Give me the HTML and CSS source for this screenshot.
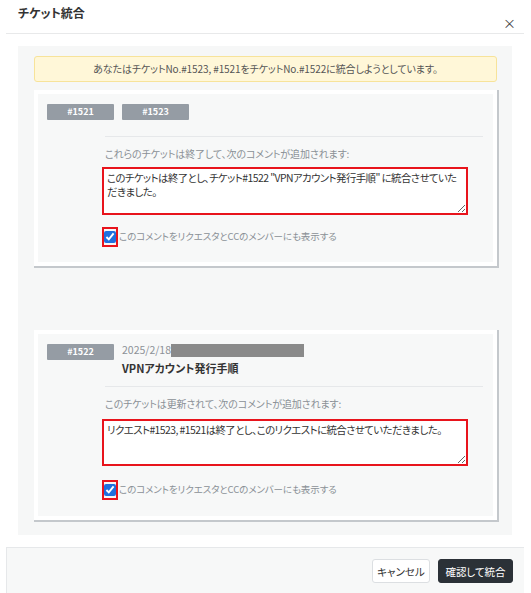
FILE: index.html
```html
<!DOCTYPE html>
<html lang="ja">
<head>
    <meta charset="UTF-8">
    <meta name="viewport" content="width=device-width, initial-scale=1.0">
    <title>チケット統合</title>
    <link rel="stylesheet" href="styles.css">
</head>
<body>
    <div class="modal">
        <div class="modal-header">
            <h1 class="modal-title">チケット統合</h1>
            <span class="close">×</span>
        </div>

        <div class="modal-body">
            <div class="merge-panel">
                <div class="alert">あなたはチケットNo.#1523, #1521をチケットNo.#1522に統合しようとしています。</div>

                <div class="ticket-card">
                    <div class="ticket-head">
                        <span class="badge">#1521</span>
                        <span class="badge">#1523</span>
                    </div>
                    <div class="ticket-body">
                        <p class="field-label">これらのチケットは終了して、次のコメントが追加されます:</p>
                        <textarea class="comment" rows="2">このチケットは終了とし、チケット#1522 "VPNアカウント発行手順" に統合させていただきました。</textarea>
                        <label class="check-row">
                            <span class="check-mark"><input type="checkbox" checked></span>
                            このコメントをリクエスタとCCのメンバーにも表示する
                        </label>
                    </div>
                </div>

                <div class="ticket-card target">
                    <div class="ticket-head">
                        <span class="badge">#1522</span>
                        <div class="ticket-info">
                            <div class="ticket-date">2025/2/18<span class="redacted"></span></div>
                            <div class="ticket-subject">VPNアカウント発行手順</div>
                        </div>
                    </div>
                    <div class="ticket-body">
                        <p class="field-label">このチケットは更新されて、次のコメントが追加されます:</p>
                        <textarea class="comment" rows="2">リクエスト#1523, #1521は終了とし、このリクエストに統合させていただきました。</textarea>
                        <label class="check-row">
                            <span class="check-mark"><input type="checkbox" checked></span>
                            このコメントをリクエスタとCCのメンバーにも表示する
                        </label>
                    </div>
                </div>
            </div>
        </div>

        <div class="modal-footer">
            <button class="btn btn-light">キャンセル</button>
            <button class="btn btn-dark">確認して統合</button>
        </div>
    </div>
</body>
</html>
```

FILE: styles.css
```css
* {
    margin: 0;
    padding: 0;
    box-sizing: border-box;
}

body {
    background: #fff;
    color: #333;
    font-family: "Noto Sans CJK JP", "Noto Sans", sans-serif;
    font-feature-settings: "palt";
    font-size: 10px;
    line-height: 1.4;
}

.modal {
    margin-left: 6px;
    width: 518px;
}

.modal-header {
    height: 34px;
    display: flex;
    align-items: center;
    justify-content: space-between;
    padding: 0 8px 0 12px;
    border-bottom: 1px solid #e8e9ea;
}

.modal-title {
    font-size: 12px;
    font-weight: bold;
    color: #333;
    margin-top: -7px;
}

.close {
    font-size: 13px;
    color: #444;
    margin-top: 14px;
}

.modal-body {
    padding: 12px;
}

.merge-panel {
    background: #f6f7f7;
    padding: 10px 15px 15px 16px;
}

.alert {
    height: 26px;
    line-height: 24px;
    text-align: center;
    background: #fff7d8;
    border: 1px solid #f7e39a;
    border-radius: 3px;
    color: #555;
    font-size: 10px;
    letter-spacing: -0.1px;
    margin-bottom: 8px;
}

.ticket-card {
    background: #f7f8f8;
    border: 4px solid #fff;
    box-shadow: 1px 1px 0 1px #c4c8cc;
    padding: 10px 10px 15px 9px;
}

.ticket-card.target {
    margin-top: 64px;
    padding-bottom: 16px;
}

.ticket-head {
    display: flex;
    gap: 8px;
}

.badge {
    width: 67px;
    height: 16px;
    line-height: 16px;
    background: #959ca4;
    color: #fff;
    font-size: 9px;
    font-weight: bold;
    text-align: center;
    border-radius: 1px;
    flex-shrink: 0;
}

.ticket-info {
    display: flex;
    flex-direction: column;
}

.ticket-date {
    display: flex;
    align-items: center;
    height: 13px;
    color: #8c9197;
    font-size: 10.5px;
}

.redacted {
    display: inline-block;
    width: 133px;
    height: 13px;
    background: #8a8a8a;
}

.ticket-subject {
    font-size: 11px;
    line-height: 15px;
    font-weight: bold;
    color: #333;
    margin-top: 4px;
}

.ticket-body {
    margin-left: 58px;
    border-top: 1px solid #e6e8ea;
    margin-top: 16px;
    padding-top: 10px;
}

.target .ticket-body {
    margin-top: 10px;
}

.field-label {
    color: #8a9096;
    font-size: 10px;
    line-height: 14px;
    letter-spacing: -0.1px;
    margin-bottom: 6px;
}

.target .field-label {
    margin-bottom: 8px;
}

.comment {
    display: block;
    width: 366px;
    height: 48px;
    margin-left: -3px;
    border: 2px solid #e8141c;
    background: #fff;
    color: #333;
    font-family: inherit;
    font-feature-settings: "palt";
    font-size: 10.4px;
    letter-spacing: -0.55px;
    line-height: 1.35;
    padding: 2px 4px 2px 3px;
    resize: vertical;
    overflow: hidden;
}

.target .comment {
    height: 47px;
}

.check-row {
    display: flex;
    align-items: center;
    margin-top: 12px;
    margin-left: -3px;
    color: #8a9096;
    font-size: 9.5px;
    letter-spacing: -0.1px;
}

.target .check-row {
    margin-top: 14px;
}

.check-mark {
    display: flex;
    align-items: center;
    justify-content: center;
    width: 16px;
    height: 20px;
    border: 2px solid #e8141c;
    margin-right: 1px;
}

.check-mark input {
    width: 12px;
    height: 12px;
    margin: 0;
    accent-color: #1f6fde;
}

.modal-footer {
    height: 60px;
    background: #f7f8f8;
    border-top: 1px solid #e6e8ea;
    border-left: 1px solid #e6e8ea;
    display: flex;
    justify-content: flex-end;
    align-items: flex-start;
    gap: 8px;
    padding: 11px 11px 0 0;
}

.btn {
    height: 24px;
    padding: 0;
    border-radius: 3px;
    font-family: inherit;
    font-feature-settings: "palt";
    font-size: 10.5px;
    white-space: nowrap;
    cursor: pointer;
}

.btn-light {
    width: 58px;
    background: #fff;
    border: 1px solid #dcdfe2;
    color: #333;
}

.btn-dark {
    width: 75px;
    background: #2b3137;
    border: 1px solid #2b3137;
    color: #fff;
}
```
